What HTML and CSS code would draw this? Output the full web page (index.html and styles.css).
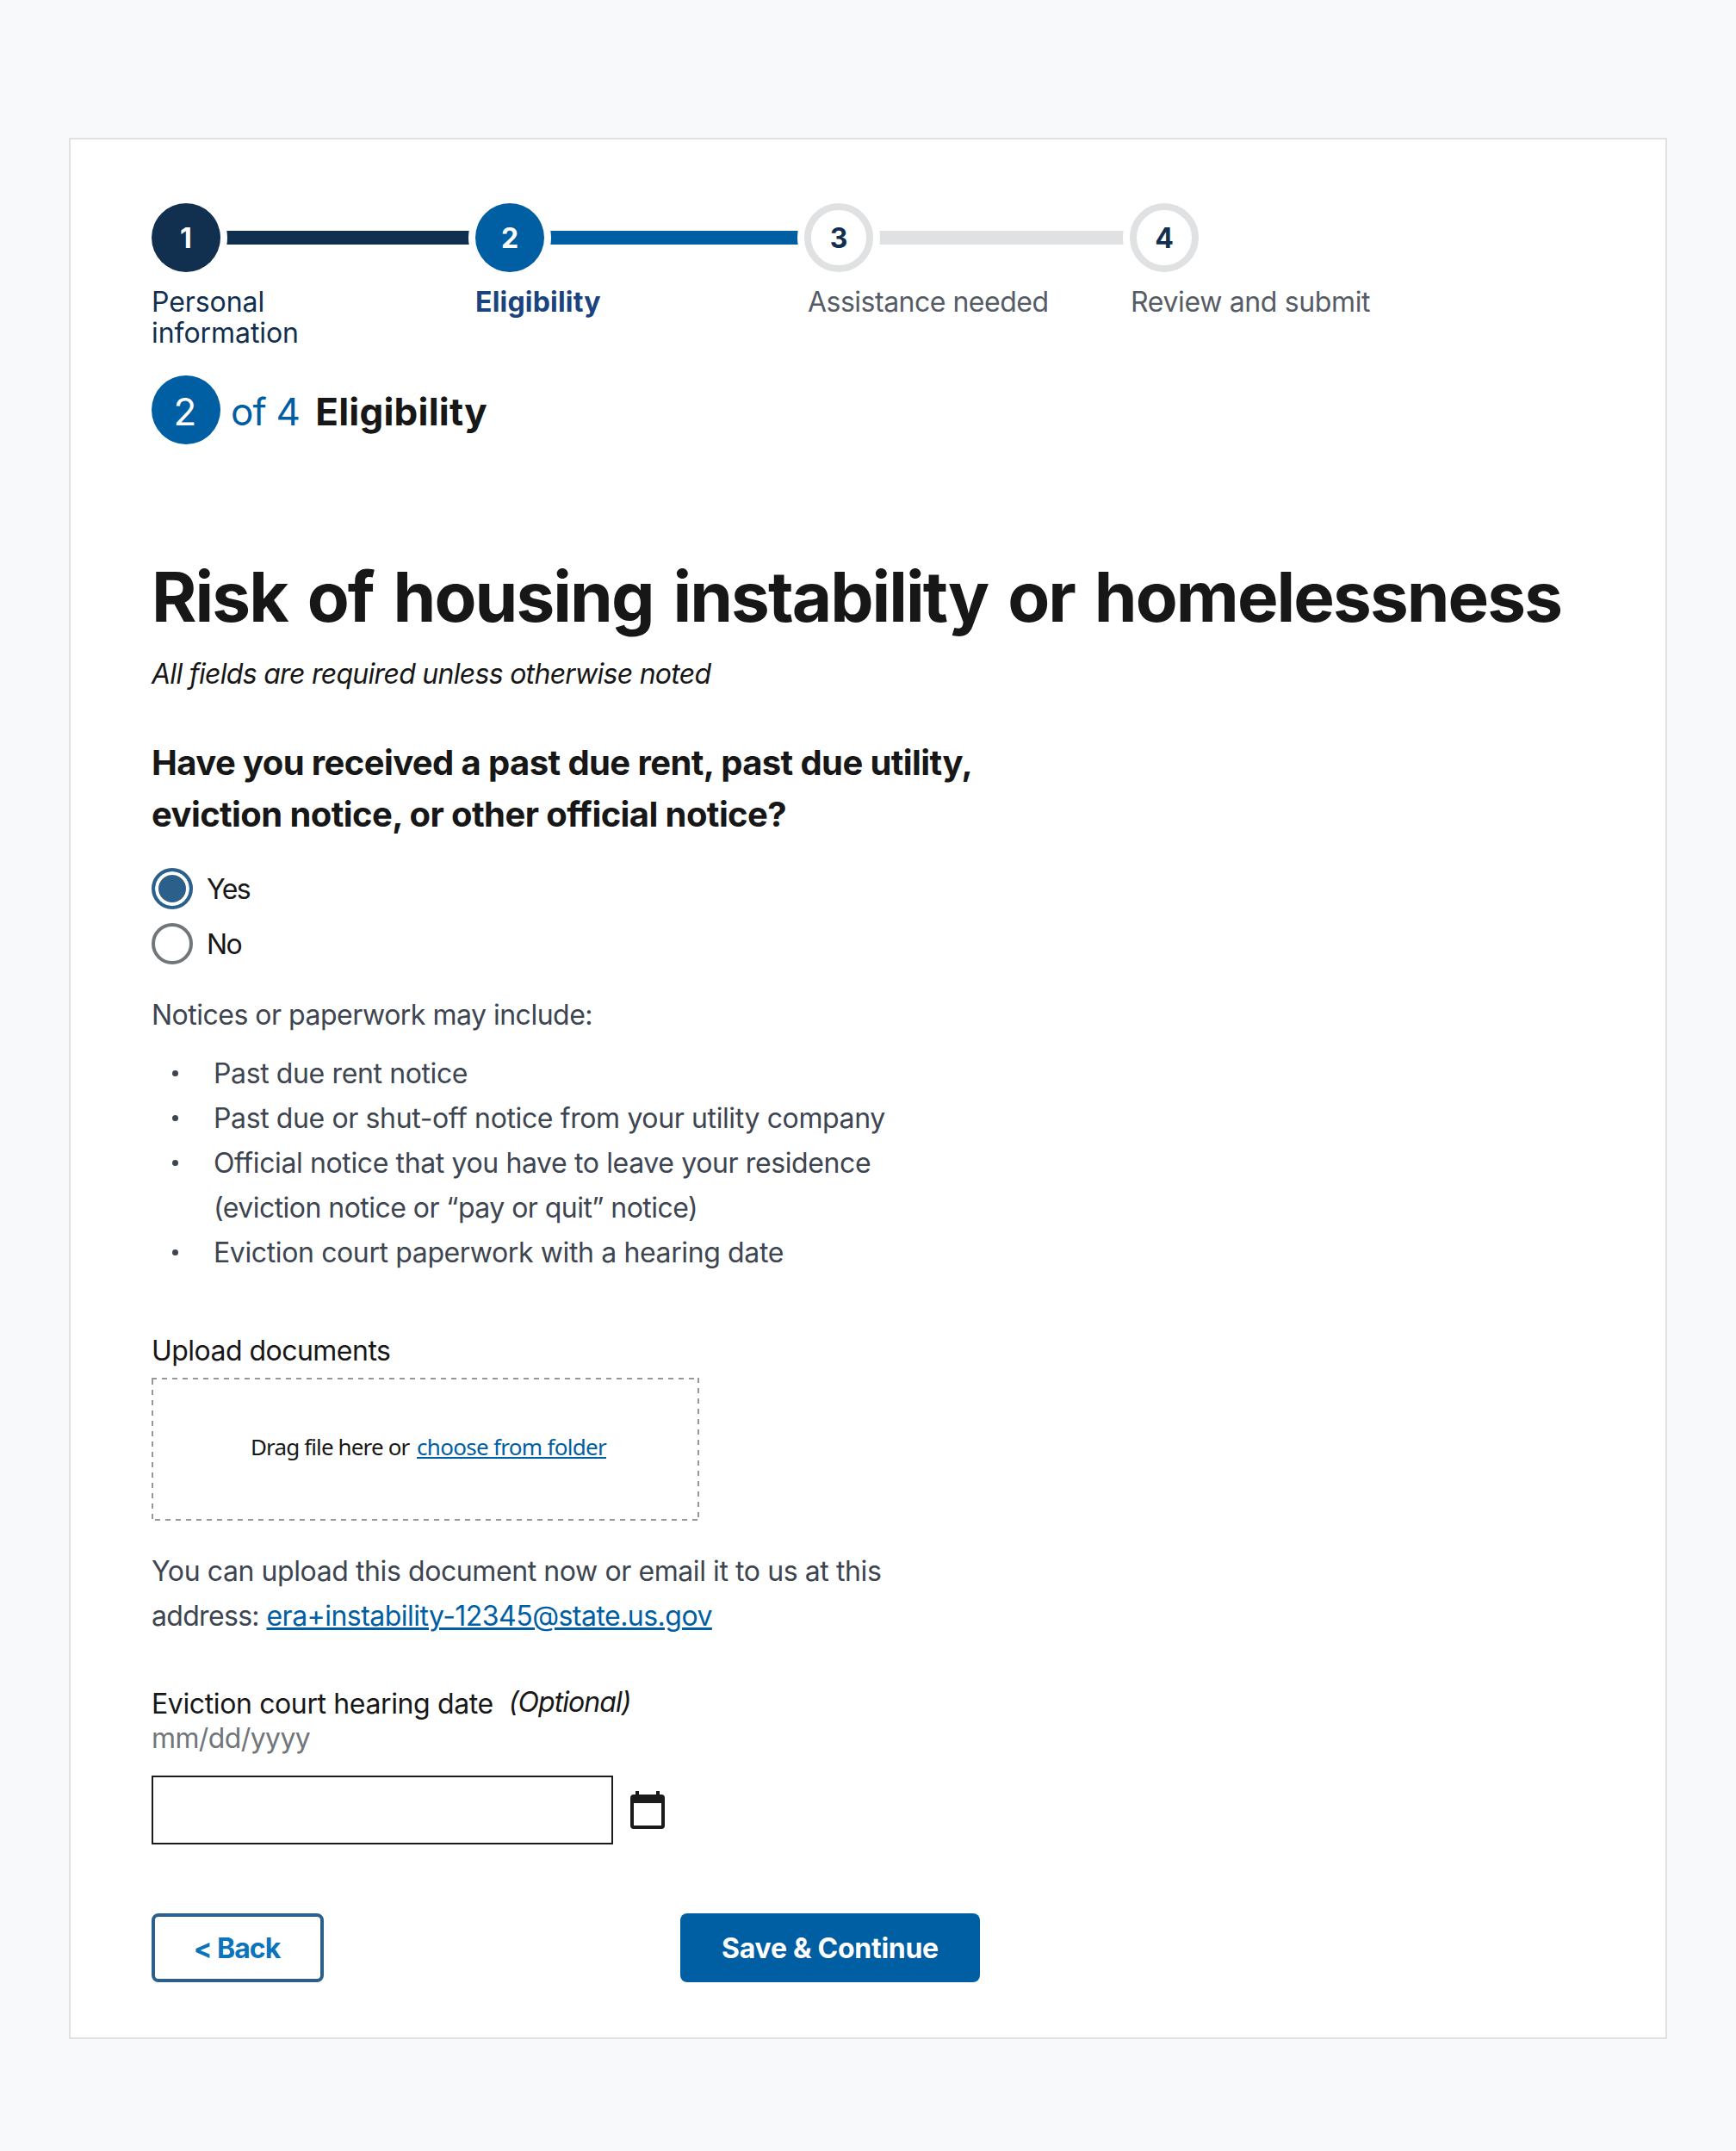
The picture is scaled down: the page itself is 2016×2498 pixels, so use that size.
FILE: index.html
```html
<!DOCTYPE html>
<html lang="en">
<head>
<meta charset="utf-8">
<title>Eligibility – Risk of housing instability or homelessness</title>
<link rel="stylesheet" href="styles.css">
</head>
<body>
<main class="card">
  <ol class="steps">
    <li class="step step--done">
      <div class="step__track"><span class="step__num">1</span><span class="step__bar"></span></div>
      <div class="step__label">Personal<br>information</div>
    </li>
    <li class="step step--current">
      <div class="step__track"><span class="step__num">2</span><span class="step__bar"></span></div>
      <div class="step__label">Eligibility</div>
    </li>
    <li class="step step--third">
      <div class="step__track"><span class="step__num">3</span><span class="step__bar"></span></div>
      <div class="step__label">Assistance needed</div>
    </li>
    <li class="step step--fourth">
      <div class="step__track"><span class="step__num">4</span></div>
      <div class="step__label">Review and submit</div>
    </li>
  </ol>

  <div class="progress">
    <span class="progress__current">2</span>
    <span class="progress__total">of 4</span>
    <span class="progress__name">Eligibility</span>
  </div>

  <h1 class="title">Risk of housing instability or homelessness</h1>
  <p class="required">All fields are required unless otherwise noted</p>

  <form class="form">
    <h2 class="question">Have you received a past due rent, past due utility, eviction notice, or other official notice?</h2>
    <div class="radios">
      <label class="radio"><input class="radio__input" type="radio" name="notice" checked><span class="radio__text radio__text--yes">Yes</span></label>
      <label class="radio"><input class="radio__input" type="radio" name="notice"><span class="radio__text radio__text--no">No</span></label>
    </div>

    <p class="hint">Notices or paperwork may include:</p>
    <ul class="notices">
      <li class="notices__item">Past due rent notice</li>
      <li class="notices__item">Past due or shut-off notice from your utility company</li>
      <li class="notices__item"><div>Official notice that you have to leave your residence <span class="notices__aside">(eviction notice or “pay or quit” notice)</span></div></li>
      <li class="notices__item">Eviction court paperwork with a hearing date</li>
    </ul>

    <div class="label label--upload">Upload documents</div>
    <div class="dropzone">
      <svg class="dropzone__outline" width="636" height="166" viewBox="0 0 636 166" fill="none" stroke="#979797" stroke-width="2" stroke-dasharray="6 6" aria-hidden="true">
        <path d="M0 1H636"/><path d="M1 2V166"/><path d="M635 0V166"/><path d="M4 165H636"/>
      </svg>
      <span class="dropzone__text">Drag file here or</span>
      <a class="dropzone__link" href="#">choose from folder</a>
    </div>
    <p class="email">You can upload this document now or email it to us at this <span class="email__word">address:</span> <a class="email__link" href="#">era+instability-12345@state.us.gov</a></p>

    <div class="date-label"><label class="label" for="date">Eviction court hearing date</label><em class="optional">(Optional)</em></div>
    <div class="format">mm/dd/yyyy</div>
    <div class="date">
      <input class="date__input" id="date" type="text">
      <svg class="date__icon" width="42" height="46" viewBox="0 0 42 46" fill="#1b1b1b" aria-hidden="true">
        <path fill-rule="evenodd" d="M6 0h4v4h20V0h4v4h2a4 4 0 0 1 4 4v32a4 4 0 0 1-4 4H4a4 4 0 0 1-4-4V8a4 4 0 0 1 4-4h2zM4 14v26h32V14z"/>
      </svg>
    </div>

    <div class="actions">
      <button class="button button--outline" type="button">&lt; Back</button>
      <button class="button button--primary" type="button">Save &amp; Continue</button>
    </div>
  </form>
</main>
</body>
</html>
```
FILE: styles.css
```css
* { box-sizing: border-box; }

body {
  margin: 0;
  padding: 160px 80px 130px;
  background: #f8f9fb;
  color: #171717;
  font-family: Inter, "Liberation Sans", sans-serif;
  font-size: 32px;
  line-height: 36px;
  letter-spacing: -0.42px;
}

h1, h2, p, ul, ol { margin: 0; padding: 0; list-style: none; }

.card {
  width: 1856px;
  padding: 74px 40px 64px 94px;
  border: 2px solid #dfe1e2;
  background: #fff;
}

/* step indicator */
.steps {
  display: grid;
  grid-template-columns: 376px 382px 378px 340px;
}
.step__track { display: flex; align-items: center; }
.step__num {
  position: relative;
  display: flex;
  flex: none;
  align-items: center;
  justify-content: center;
  width: 80px;
  height: 80px;
  padding-top: 2px;
  border-radius: 50%;
  box-shadow: 0 0 0 8px #fff;
  background: #fff;
  color: #112f4e;
  font-weight: 700;
  letter-spacing: 0;
}
.step__bar { flex: 1; height: 16px; background: #dfe1e2; }
.step__label { margin-top: 17px; color: #565c65; white-space: nowrap; }

.step--done .step__num, .step--done .step__bar { background: #112f4e; }
.step--done .step__num, .step--current .step__num { color: #fff; }
.step--done .step__label { color: #112f4e; letter-spacing: -0.06px; }
.step--current .step__num, .step--current .step__bar { background: #005ea2; }
.step--current .step__label { color: #1a4480; font-weight: 700; letter-spacing: 0.2px; }
.step--third .step__num, .step--fourth .step__num { border: 8px solid #dfe1e2; }
.step--third .step__label { padding-left: 4px; letter-spacing: -0.5px; }
.step--fourth .step__label { padding-left: 1px; letter-spacing: -0.36px; }

.progress {
  display: flex;
  align-items: center;
  margin-top: 31px;
  font-size: 44px;
  line-height: 52px;
}
.progress__current {
  display: flex;
  align-items: center;
  justify-content: center;
  width: 80px;
  height: 80px;
  padding: 4px 2px 0 0;
  border-radius: 50%;
  background: #005ea2;
  color: #fff;
  letter-spacing: 0;
}
.progress__total { margin-left: 12px; padding-top: 4px; color: #005ea2; letter-spacing: -0.81px; }
.progress__name { margin-left: 18px; padding-top: 4px; font-weight: 700; letter-spacing: 0.21px; }

.title {
  margin-top: 129px;
  font-size: 80px;
  line-height: 96px;
  letter-spacing: -1.95px;
  word-spacing: 6px;
  white-space: nowrap;
}
.required { margin-top: 16px; font-style: italic; line-height: 52px; letter-spacing: -0.71px; }

/* form */
.form { width: 962px; }
.question { margin-top: 47px; font-size: 40px; line-height: 60px; letter-spacing: -0.6px; }

.radios { display: flex; flex-direction: column; gap: 16px; margin-top: 32px; }
.radio { display: flex; align-items: center; }
.radio__input {
  appearance: none;
  width: 48px;
  height: 48px;
  margin: 0;
  border: 4px solid #71767a;
  border-radius: 50%;
  background: #fff;
}
.radio__input:checked {
  border-color: #2c608a;
  background: #2c608a;
  box-shadow: inset 0 0 0 4px #fff;
}
.radio__text { margin-left: 16px; padding-top: 2px; }
.radio__text--yes { letter-spacing: -1.6px; }
.radio__text--no { letter-spacing: -1.6px; }

.hint { margin-top: 33px; color: #3d4551; line-height: 52px; letter-spacing: -0.5px; }
.notices { margin-top: 16px; color: #3d4551; line-height: 52px; letter-spacing: -0.38px; }
.notices__item { display: flex; padding: 0 80px 0 24px; }
.notices__item::before {
  content: "";
  flex: none;
  width: 7px;
  height: 7px;
  margin: 22px 41px 0 0;
  border-radius: 50%;
  background: #3d4551;
}
.notices__aside { letter-spacing: -0.54px; }

.label { letter-spacing: -0.38px; white-space: nowrap; }
.label--upload { margin-top: 70px; letter-spacing: -0.53px; }

.dropzone {
  position: relative;
  display: flex;
  align-items: center;
  width: 636px;
  height: 166px;
  margin-top: 13px;
  padding: 0 0 6px 115px;
  font-family: "Noto Sans", "Open Sans", sans-serif;
  font-size: 26px;
  letter-spacing: -0.8px;
  white-space: nowrap;
}
.dropzone__outline { position: absolute; top: 0; left: 0; }
.dropzone__text { width: 193px; letter-spacing: -0.87px; }
.dropzone__link {
  color: #005ea2;
  letter-spacing: -0.7px;
  text-decoration: underline 2px;
  text-underline-offset: 2px;
}

.email { margin-top: 33px; padding-right: 80px; color: #3d4551; line-height: 52px; letter-spacing: -0.41px; }
.email__word { letter-spacing: -0.68px; }
.email__link {
  color: #005ea2;
  letter-spacing: -0.53px;
  text-decoration: underline 3px;
  text-underline-offset: 2px;
}

.date-label { display: flex; align-items: flex-start; margin-top: 58px; }
.optional { margin-left: 18px; line-height: 32px; letter-spacing: -0.95px; }
.format { margin-top: 4px; color: #71767a; letter-spacing: -0.6px; }
.date { display: flex; align-items: flex-start; margin-top: 25px; }
.date__input {
  width: 536px;
  height: 80px;
  border: 2px solid #1b1b1b;
  border-radius: 0;
  background: #fff;
  font: inherit;
}
.date__icon { margin: 18px 0 0 20px; }

.actions { display: flex; justify-content: space-between; margin-top: 80px; }
.button {
  height: 80px;
  padding: 2px 0 0;
  border: 0;
  border-radius: 8px;
  font: inherit;
  font-weight: 700;
}
.button--outline {
  width: 200px;
  padding-right: 2px;
  border: 4px solid #2c608a;
  background: #fff;
  color: #0b74bb;
  letter-spacing: -0.97px;
}
.button--primary { width: 348px; background: #005ea2; color: #fff; letter-spacing: -0.27px; }
```
